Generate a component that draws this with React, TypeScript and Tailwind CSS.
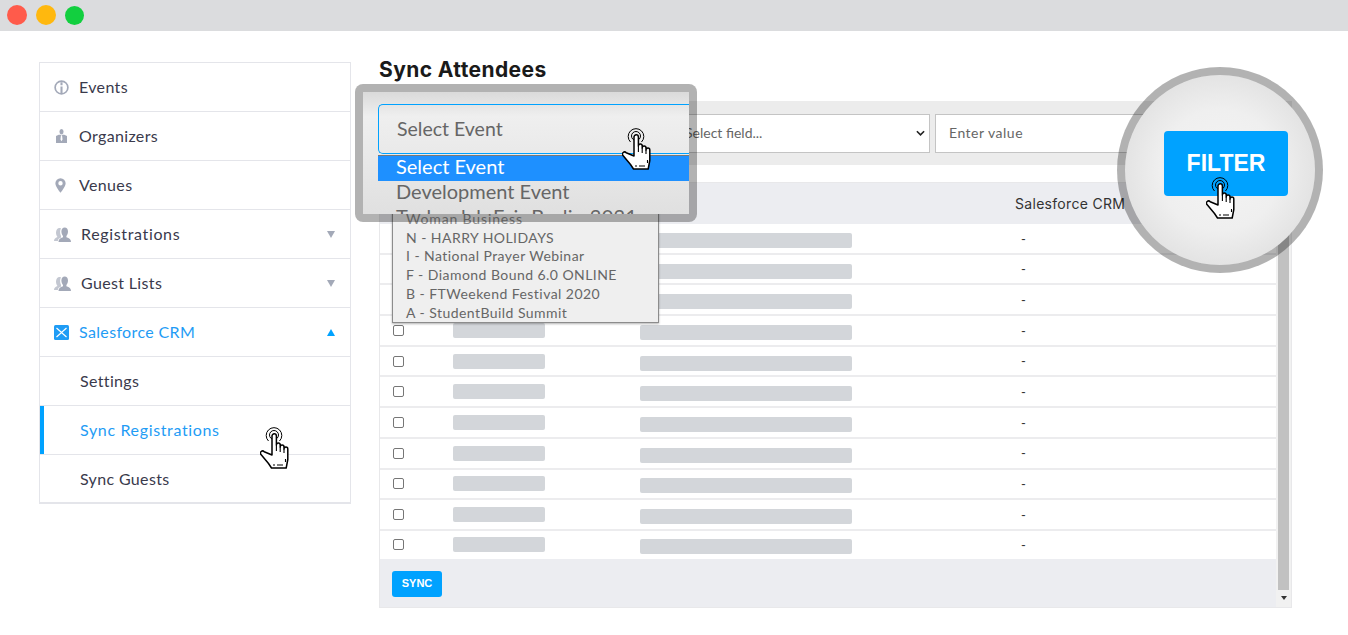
import React from 'react';

const FONT = "font-['Lato','Noto_Sans',sans-serif]";

const Hand = ({ className }: { className: string }) => (
  <svg viewBox="0 0 30 42" className={className}>
    <circle cx="14" cy="8" r="4.500" fill="none" stroke="#000" strokeWidth="1" />
    <path d="M8.500 14a7.800 7.800 0 1 1 11 0" fill="none" stroke="#000" strokeWidth="1" />
    <path
      d="M12 28V9a2.200 2.200 0 0 1 4.400 0V18a1.900 1.900 0 0 1 3.800 0v2a1.900 1.900 0 0 1 3.800 0v2a1.900 1.900 0 0 1 3.800 0v10.500l-1.600 8.500H11.500L8.500 36.500L1 27.500a2.100 2.100 0 0 1 3.200-2.800z"
      fill="#fff"
      stroke="#000"
      strokeWidth="1.500"
      strokeLinejoin="round"
    />
    <path d="M16.400 18v6M20.200 20v5M24 22v4M13 38h2M17 38h6M25.500 32v3" fill="none" stroke="#000" strokeWidth="1.100" />
  </svg>
);

const InfoIcon = () => (
  <svg viewBox="0 0 16 16" className="w-[15px] h-[15px]">
    <circle cx="8" cy="8" r="6.800" fill="none" stroke="#a3a9b8" strokeWidth="1.800" />
    <path d="M8 7v7M8 2.500v3" stroke="#a3a9b8" strokeWidth="2.200" />
  </svg>
);

const TieIcon = () => (
  <svg viewBox="0 0 16 16" className="ml-[2px] w-[11px] h-[14px]" preserveAspectRatio="none">
    <circle cx="8" cy="3" r="3" fill="#a3a9b8" />
    <path d="M0 16V8l4-1.500h8L16 8v8zM7.200 7l-.7 5L8 14l1.500-2-.7-5z" fill="#a3a9b8" fillRule="evenodd" />
  </svg>
);

const PinIcon = () => (
  <svg viewBox="0 0 12 16" className="ml-[1px] w-[11px] h-[15px]">
    <path d="M6 0a5.600 5.600 0 0 0-5.600 5.600C.4 9.500 6 16 6 16s5.600-6.500 5.600-10.400A5.600 5.600 0 0 0 6 0zm0 8a2.400 2.400 0 1 1 0-4.800A2.400 2.400 0 0 1 6 8z" fill="#a3a9b8" />
  </svg>
);

const UsersIcon = () => (
  <svg viewBox="0 0 17 15" className="w-[17px] h-[15px]">
    <path d="M0 14c0-2 1-3 3.500-4C2.500 9 2 7 2 5.500 2 3 3.500 1 5.500 1c.6 0 1.100.1 1.500.4C5.800 3 5.800 6.500 7 9v1.500L4.500 12 3.800 14z" fill="#c3c7d1" />
    <path d="M4.500 15c0-2.800 1.500-3.800 4.500-4.800V9C8 8 7.400 6 7.400 4.500 7.400 2 8.800 .5 10.700 .5S14 2 14 4.500C14 6 13.400 8 12.400 9v1.200c3 1 4.600 2 4.600 4.800z" fill="#a3a9b8" />
  </svg>
);

const CrossIcon = () => (
  <svg viewBox="0 0 15 15" className="w-[15px] h-[15px]">
    <rect width="15" height="15" rx="1.500" fill="#1f9cf5" />
    <path d="M2.500 3L7.500 7.500L12.500 3M2.500 12L7.500 7.500L12.500 12" fill="none" stroke="#fff" strokeWidth="1.200" />
  </svg>
);

const MenuRow = ({ icon, label, arrow, active, sub, current, last, wide }: {
  icon?: React.ReactNode;
  label: string;
  arrow?: 'up' | 'down';
  active?: boolean;
  sub?: boolean;
  current?: boolean;
  last?: boolean;
  wide?: boolean;
}) => (
  <div className={`relative flex items-center ${last ? 'h-[48px]' : 'h-[49px] border-b border-[#e4e5ea]'} ${sub ? 'pl-10' : 'pl-[14px]'} pr-[15px]`}>
    {current && <div className="absolute left-0 top-0 bottom-0 w-1 bg-[#00a2ff]" />}
    {icon && <div className={`${arrow === 'down' ? 'w-[27px]' : 'w-[25px]'} flex items-center justify-start`}>{icon}</div>}
    <span className={`text-[16px] ${wide ? 'tracking-[0.65px]' : 'tracking-[0.35px]'} ${active ? 'text-[#1f9cf5]' : 'text-[#3a3a4c]'}`}>{label}</span>
    {arrow === 'down' && <span className="ml-auto w-0 h-0 border-x-[4px] border-x-transparent border-t-[7px] border-t-[#a3a9b8]" />}
    {arrow === 'up' && <span className="ml-auto w-0 h-0 border-x-[4px] border-x-transparent border-b-[7px] border-b-[#00a2ff]" />}
  </div>
);

const Sidebar = () => (
  <div className="w-[312px] h-[442px] border border-[#e4e5ea] border-b-2">
    <MenuRow icon={<InfoIcon />} label="Events" />
    <MenuRow icon={<TieIcon />} label="Organizers" />
    <MenuRow icon={<PinIcon />} label="Venues" />
    <MenuRow icon={<UsersIcon />} label="Registrations" arrow="down" wide />
    <MenuRow icon={<UsersIcon />} label="Guest Lists" arrow="down" />
    <MenuRow icon={<CrossIcon />} label="Salesforce CRM" arrow="up" active />
    <MenuRow label="Settings" sub />
    <MenuRow label="Sync Registrations" sub active current wide />
    <MenuRow label="Sync Guests" sub last />
  </div>
);

const rows = [0, 1, 2, 3, 4, 5, 6, 7, 8, 9, 10];

const TableRows = () => (
  <div>
    {rows.map((r) => (
      <div key={r} className={`flex items-center ${r === 10 ? 'h-[28px] pt-[1px]' : 'h-[30.7px] pt-[2px] border-b-2 border-[#ececee]'}`}>
        <input type="checkbox" readOnly className="ml-[13px] w-[11px] h-[11px] appearance-none rounded-[2px] border border-[#767676] bg-white -translate-y-px" />
        <div className="ml-[49px] w-[92px] h-[15px] rounded-[2px] bg-[#d3d6da] -translate-y-px" />
        <div className="ml-[95px] w-[212px] h-[15px] rounded-[2px] bg-[#d3d6da] translate-y-px" />
        <span className="ml-[169px] text-[13px] text-[#333]">-</span>
      </div>
    ))}
  </div>
);

export default function App() {
  return (
    <div className={`relative w-[1348px] h-[635px] overflow-hidden bg-white ${FONT}`}>
      <div className="h-[31px] bg-[#dbdcde] flex items-center gap-[9px] pl-[7px] pb-[1px]">
        <div className="w-5 h-5 rounded-full bg-[#ff5b4b]" />
        <div className="w-5 h-5 rounded-full bg-[#ffb80e]" />
        <div className="w-[19px] h-[19px] rounded-full bg-[#12cf3f]" />
      </div>

      <div className="flex pl-[39px] pt-[31px]">
        <Sidebar />
        <div className="ml-[28px] w-[913px]">
          <h1 className="font-['Inter',sans-serif] font-bold text-[21px] leading-[26px] mt-[-5px] tracking-[0.4px] text-[#1a1a1a]">Sync Attendees</h1>
          <div className="mt-[18px] h-16 bg-[#ececec] flex items-center pl-[300px] pr-3 gap-[5px]">
            <div className="w-[251px] h-[39px] bg-white border border-[#c4c4c4] flex items-center justify-between pl-[5px] pr-[4px]">
              <span className="text-[14px] text-[#666] -translate-y-px">Select field...</span>
              <svg viewBox="0 0 10 6" className="w-[9px] h-[6px]"><path d="M1 1l4 4 4-4" fill="none" stroke="#222" strokeWidth="1.800" /></svg>
            </div>
            <div className="w-[230px] h-[39px] bg-white border border-[#c4c4c4] flex items-center pl-[13px]">
              <span className="text-[14px] tracking-[0.5px] text-[#666] -translate-y-px">Enter value</span>
            </div>
          </div>
          <div className="mt-[17px] h-[426px] border border-[#e8e8ea] flex">
            <div className="w-[897px] flex flex-col">
              <div className="h-[41px] bg-[#ecedf1] flex items-center pl-[635px]">
                <span className="font-['Inter',sans-serif] text-[14px] text-[#333] tracking-[0.3px]">Salesforce CRM</span>
              </div>
              <TableRows />
              <div className="flex-1 bg-[#ecedf1] pl-[12px] pt-[10px]">
                <button className="w-[50px] h-[26px] pb-[1px] rounded-[3px] bg-[#00a2ff] text-white text-[11px] font-bold font-['Liberation_Sans',sans-serif]">SYNC</button>
              </div>
            </div>
            <div className="flex-1 bg-[#f1f1f1] flex flex-col items-center px-[2px]">
              <div className="w-[11px] h-[365px] mt-[42px] bg-[#c1c1c1]" />
              <span className="mt-[6px] w-0 h-0 border-x-[3px] border-x-transparent border-t-[4px] border-t-[#333]" />
            </div>
          </div>
        </div>
      </div>

      {/* rest of the event list, sits below the magnifier */}
      <div className="absolute left-[392px] top-[208px] w-[267px] h-[115px] bg-[#efefef] border border-[#8c8c8c] shadow-[0_1px_2px_rgba(0,0,0,0.3)] px-[13px] pt-[1px] text-[14px] leading-[18.7px] text-[#666] tracking-[0.45px]">
        <div className="text-[#8a8a8a] tracking-[0.85px]">Woman Business</div>
        <div>N - HARRY HOLIDAYS</div>
        <div>I - National Prayer Webinar</div>
        <div>F - Diamond Bound 6.0 ONLINE</div>
        <div>B - FTWeekend Festival 2020</div>
        <div>A - StudentBuild Summit</div>
      </div>

      {/* magnifier over the event select */}
      <div className="absolute left-[355px] top-[84px] w-[342px] h-[138px] rounded-[8px] border-[8px] border-black/30 bg-clip-padding overflow-hidden bg-gradient-to-b from-[#dadada] via-[#efefef] via-20% to-[#e0e0e0]">
        <div className="ml-[15px] mt-[12px] h-[50px] border border-[#00a2ff] border-r-0 rounded-l-[5px] flex items-center pl-[18px] text-[19.5px] text-[#666]">Select Event</div>
        <div className="ml-[15px] mt-[1px] border-t border-[#777] text-[20px] leading-[25px] pl-[18px] -mr-px text-[#666] relative">
          <div className="absolute left-0 right-0 top-0 h-[25px] bg-[#1e90ff]" />
          <div className="relative text-white -translate-y-[2px]">Select Event</div>
          <div className="-translate-y-[2px]">Development Event</div>
          <div className="-translate-y-[2px] tracking-[0.3px]">Technolab Fair Berlin 2021</div>
        </div>
      </div>
      <Hand className="absolute left-[622px] top-[128px] w-[30px] h-[42px]" />

      {/* magnifier over the filter button */}
      <div className="absolute left-[1117px] top-[67px] w-[206px] h-[206px] rounded-full border-[8px] border-black/30 bg-clip-padding bg-[radial-gradient(circle,#f4f4f4_0%,#efefef_45%,#d6d6d6_100%)] flex items-center justify-center">
        <div className="w-[124px] h-[65px] rounded-[4px] bg-[#00a2ff] flex items-center justify-center text-white text-[23px] font-bold font-['Liberation_Sans',sans-serif] translate-x-[6px] -translate-y-[7px]">FILTER</div>
      </div>
      <Hand className="absolute left-[1206px] top-[177px] w-[30px] h-[42px]" />

      <Hand className="absolute left-[260px] top-[427px] w-[30px] h-[42px]" />
    </div>
  );
}
